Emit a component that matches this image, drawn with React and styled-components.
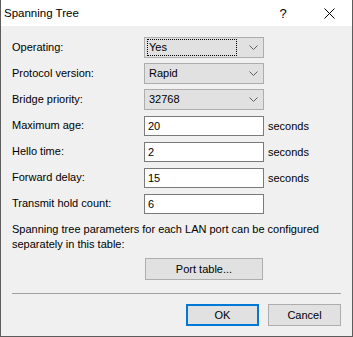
import React from "react";
import styled, { createGlobalStyle } from "styled-components";

const GlobalStyle = createGlobalStyle`
  html, body {
    margin: 0;
    padding: 0;
    background: #ffffff;
  }
  * {
    box-sizing: border-box;
  }
`;

const Window = styled.div`
  width: 353px;
  height: 337px;
  border: 1px solid #5c5c5c;
  border-top: none;
  background: #f0f0f0;
  font-family: "Liberation Sans", Arial, sans-serif;
  font-size: 11px;
  color: #000;
  display: flex;
  flex-direction: column;
`;

const TitleBar = styled.div`
  height: 26px;
  background: #ffffff;
  display: flex;
  align-items: center;
  padding-left: 3px;
`;

const Title = styled.span`
  flex: 1;
  font-size: 11.5px;
`;

const TitleButton = styled.div`
  width: 46px;
  height: 26px;
  display: flex;
  align-items: center;
  justify-content: center;
  font-size: 13px;
`;

const Body = styled.div`
  padding: 11px 11px 0 11px;
  display: flex;
  flex-direction: column;
`;

const Form = styled.div`
  display: grid;
  grid-template-columns: 132px 120px auto;
  grid-auto-rows: 21px;
  row-gap: 5px;
  align-items: center;
`;

const Label = styled.span`
  line-height: 21px;
`;

const Combo = styled.div`
  height: 21px;
  background: #e1e1e1;
  border: 1px solid #adadad;
  display: flex;
  align-items: center;
  padding: 0 0 0 2px;
`;

const ComboText = styled.span`
  flex: 1;
  height: 17px;
  line-height: 15px;
  padding-left: 1px;
  margin-right: 12px;
  border: 1px dotted ${(p) => (p.focused ? "#000" : "transparent")};
`;

const Chevron = styled.svg`
  width: 9px;
  height: 5px;
  margin-right: 5px;
`;

const TextBox = styled.div`
  height: 20px;
  background: #fff;
  border: 1px solid #7a7a7a;
  line-height: 18px;
  padding-left: 3px;
`;

const Unit = styled.span`
  padding-left: 4px;
`;

const Note = styled.p`
  margin: 8px 0 0 0;
  line-height: 15px;
`;

const Button = styled.div`
  height: 22px;
  background: #e1e1e1;
  border: ${(p) => (p.primary ? "2px solid #0078d7" : "1px solid #adadad")};
  display: flex;
  align-items: center;
  justify-content: center;
  width: ${(p) => p.width}px;
`;

const PortRow = styled.div`
  display: flex;
  padding-left: 133px;
  margin-top: 6px;
`;

const Separator = styled.div`
  height: 1px;
  background: #a0a0a0;
  margin: 13px 0 0 0;
  width: 329px;
`;

const Footer = styled.div`
  display: flex;
  justify-content: flex-end;
  gap: 9px;
  margin-top: 10px;
`;

const ChevronIcon = () => (
  <Chevron viewBox="0 0 9 5">
    <path d="M0.5 0.5 L4.5 4.5 L8.5 0.5" fill="none" stroke="#606060" strokeWidth="1" />
  </Chevron>
);

const ComboBox = ({ value, focused }) => (
  <Combo>
    <ComboText focused={focused}>{value}</ComboText>
    <ChevronIcon />
  </Combo>
);

const fields = [
  { label: "Operating:", combo: "Yes", focused: true },
  { label: "Protocol version:", combo: "Rapid" },
  { label: "Bridge priority:", combo: "32768" },
  { label: "Maximum age:", text: "20", unit: "seconds" },
  { label: "Hello time:", text: "2", unit: "seconds" },
  { label: "Forward delay:", text: "15", unit: "seconds" },
  { label: "Transmit hold count:", text: "6" },
];

const App = () => {
  return (
    <>
      <GlobalStyle />
      <Window>
        <TitleBar>
          <Title>Spanning Tree</Title>
          <TitleButton>?</TitleButton>
          <TitleButton>
            <svg width="11" height="11" viewBox="0 0 11 11">
              <path d="M0.5 0.5 L10.5 10.5 M10.5 0.5 L0.5 10.5" stroke="#000" strokeWidth="1" />
            </svg>
          </TitleButton>
        </TitleBar>
        <Body>
          <Form>
            {fields.map((f) => (
              <React.Fragment key={f.label}>
                <Label>{f.label}</Label>
                {f.combo ? (
                  <ComboBox value={f.combo} focused={f.focused} />
                ) : (
                  <TextBox>{f.text}</TextBox>
                )}
                <Unit>{f.unit}</Unit>
              </React.Fragment>
            ))}
          </Form>
          <Note>
            Spanning tree parameters for each LAN port can be configured
            <br />
            separately in this table:
          </Note>
          <PortRow>
            <Button width={118}>Port table...</Button>
          </PortRow>
          <Separator />
          <Footer>
            <Button primary width={73}>OK</Button>
            <Button width={73}>Cancel</Button>
          </Footer>
        </Body>
      </Window>
    </>
  );
};

export default App;
